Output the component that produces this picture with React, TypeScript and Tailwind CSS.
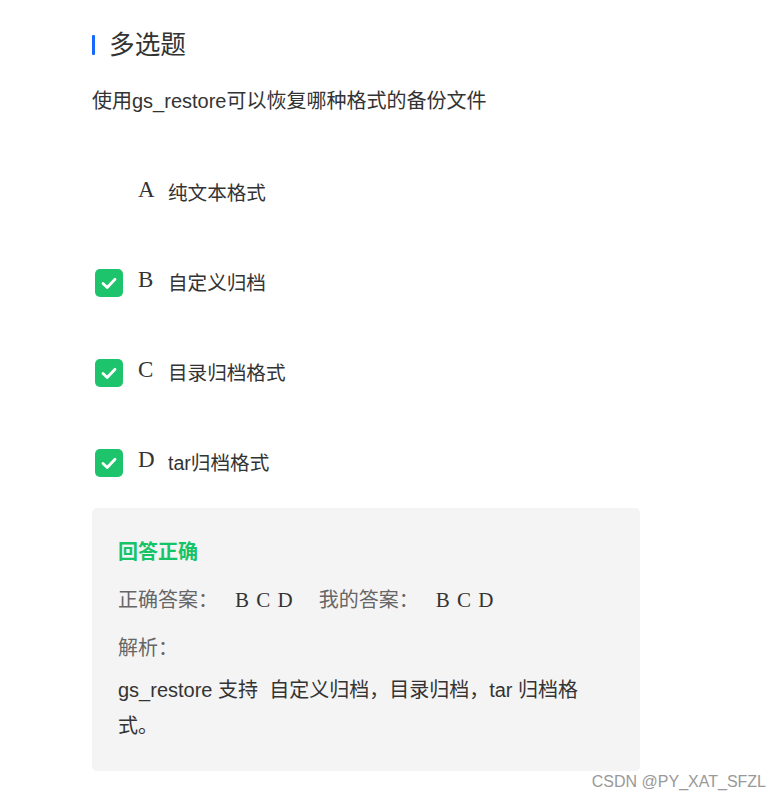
import React from "react";

const sans = { fontFamily: '"Liberation Sans", Arial, "Noto Sans CJK SC", sans-serif' };
const serif = { fontFamily: '"Liberation Serif", "Times New Roman", serif' };

function Check() {
  return (
    <div className="w-[28px] h-[28px] rounded-[5px] bg-[#1ec46b] flex items-center justify-center">
      <svg width="28" height="28" viewBox="0 0 28 28" fill="none">
        <path d="M8 14.5l4.2 4 7.8-8.2" stroke="white" strokeWidth="2.8" strokeLinecap="round" strokeLinejoin="round" />
      </svg>
    </div>
  );
}

const options = [
  { k: "A", t: "纯文本格式", c: false },
  { k: "B", t: "自定义归档", c: true },
  { k: "C", t: "目录归档格式", c: true },
  { k: "D", t: "tar归档格式", c: true },
];

export default function App() {
  return (
    <div className="w-[782px] h-[800px] bg-white text-[#333] pl-[92px] pt-[29px]" style={sans}>
      <div className="flex items-center h-[32px]">
        <div className="w-[3px] h-[20px] bg-[#1668ff] rounded-[1px] mr-[14px]" />
        <div className="text-[25.7px] leading-[32px] text-[#333]">多选题</div>
      </div>
      <div className="mt-[27px] text-[20px] leading-[26px] text-[#333]">使用gs_restore可以恢复哪种格式的备份文件</div>
      <div className="mt-[65px] flex flex-col gap-[62px]">
        {options.map((o) => (
          <div key={o.k} className="flex items-center h-[28px]">
            <div className="w-[31px] pl-[3px] flex-none">{o.c && <Check />}</div>
            <div className="ml-[15px] w-[30px] text-[23px] leading-[28px] -mt-[6px] text-[#333]" style={serif}>
              {o.k}
            </div>
            <div className="text-[19.6px] leading-[28px] text-[#333]">{o.t}</div>
          </div>
        ))}
      </div>
      <div className="mt-[31px] w-[548px] h-[263px] bg-[#f4f4f4] rounded-[5px] pl-[26px] pt-[30px]">
        <div className="text-[20px] leading-[28px] font-bold text-[#17c367]">回答正确</div>
        <div className="mt-[20px] flex items-center text-[20px] leading-[28px]">
          <span className="text-[#666]">正确答案：</span>
          <span className="ml-[17px] text-[21px] text-[#333] tracking-[1px]" style={serif}>B C D</span>
          <span className="ml-[25px] text-[#666]">我的答案：</span>
          <span className="ml-[17px] text-[21px] text-[#333] tracking-[1px]" style={serif}>B C D</span>
        </div>
        <div className="mt-[20px] text-[20px] leading-[28px] text-[#666]">解析：</div>
        <div className="mt-[10px] text-[20px] leading-[36px] text-[#333]">
          gs_restore 支持&nbsp; 自定义归档，目录归档，tar 归档格
          <br />
          式。
        </div>
      </div>
      <div className="mt-[1px] w-[674px] flex justify-end text-[16px] leading-[20px] text-[#999]">CSDN @PY_XAT_SFZL</div>
    </div>
  );
}
